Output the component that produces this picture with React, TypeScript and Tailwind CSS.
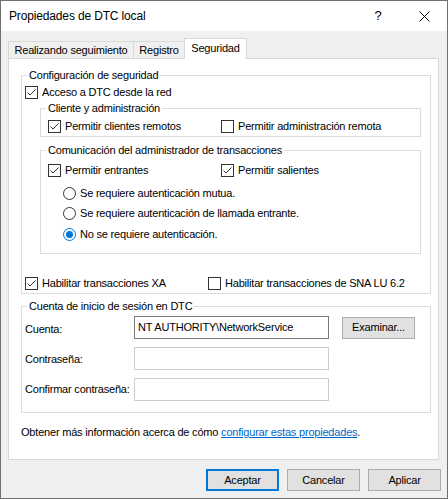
import React from "react";

const font = "font-['Liberation_Sans',Arial,sans-serif] text-[11px] tracking-[-0.2px] text-black";

const CheckBox: React.FC<{ checked?: boolean }> = ({ checked }) => (
  <svg width="13" height="13" viewBox="0 0 13 13" className="shrink-0">
    <rect x="0.5" y="0.5" width="12" height="12" fill="#fff" stroke="#333" />
    {checked && <path d="M2.5 6.5 L5 9 L10.5 3.5" fill="none" stroke="#333" strokeWidth="1" />}
  </svg>
);

const Radio: React.FC<{ checked?: boolean }> = ({ checked }) => (
  <svg width="13" height="13" viewBox="0 0 13 13" className="shrink-0">
    <circle cx="6.5" cy="6.5" r="6" fill="#fff" stroke={checked ? "#0078d7" : "#333"} />
    {checked && <circle cx="6.5" cy="6.5" r="3.5" fill="#0078d7" />}
  </svg>
);

const Check: React.FC<{ label: string; checked?: boolean; className?: string }> = ({ label, checked, className }) => (
  <div className={`flex h-[16px] items-center gap-[4px] ${className ?? ""}`}>
    <CheckBox checked={checked} />
    <span className="whitespace-nowrap leading-[15px]">{label}</span>
  </div>
);

const RadioRow: React.FC<{ label: string; checked?: boolean; className?: string }> = ({ label, checked, className }) => (
  <div className={`flex h-[16px] items-center gap-[4px] ${className ?? ""}`}>
    <Radio checked={checked} />
    <span className="whitespace-nowrap leading-[15px]">{label}</span>
  </div>
);

// group box: label pulled up over the top border
const GroupLabel: React.FC<{ text: string; className?: string }> = ({ text, className }) => (
  <div className={`-mt-[8px] h-[15px] w-fit bg-white px-[2px] leading-[15px] whitespace-nowrap ${className ?? ""}`}>
    {text}
  </div>
);

const Button: React.FC<{ label: string; primary?: boolean }> = ({ label, primary }) => (
  <div
    className={`flex h-[22px] w-[73px] items-center justify-center bg-[#e1e1e1] ${
      primary ? "border-2 border-[#0078d7]" : "border border-[#adadad]"
    }`}
  >
    {label}
  </div>
);

export default function App() {
  return (
    <div className={`flex h-[499px] w-[448px] flex-col border border-[#707070] bg-[#f0f0f0] ${font}`}>
      {/* title bar */}
      <div className="flex h-[30px] shrink-0 items-center bg-white">
        <div className="flex-1 pl-[8px] text-[12px] tracking-[-0.15px]">Propiedades de DTC local</div>
        <div className="flex h-[30px] w-[46px] items-center justify-center text-[13px]">?</div>
        <div className="flex h-[30px] w-[46px] items-center justify-center">
          <svg width="11" height="11" viewBox="0 0 11 11">
            <path d="M0.5 0.5 L10.5 10.5 M10.5 0.5 L0.5 10.5" stroke="#000" strokeWidth="1" />
          </svg>
        </div>
      </div>

      {/* tabs */}
      <div className="ml-[7px] mt-[7px] flex h-[20px] shrink-0 items-end">
        <div className="flex h-[17px] w-[126px] items-center justify-center border-x border-t border-[#d9d9d9] pt-[1px]">
          Realizando seguimiento
        </div>
        <div className="flex h-[17px] w-[50px] items-center justify-center border-t border-[#d9d9d9] pt-[1px]">
          Registro
        </div>
        <div className="relative z-10 -mb-[1px] flex h-[21px] w-[63px] items-center justify-center border-x border-t border-[#d9d9d9] bg-white pb-[2px]">
          Seguridad
        </div>
      </div>

      {/* panel */}
      <div className="ml-[7px] flex h-[402px] w-[431px] shrink-0 flex-col border border-[#d9d9d9] bg-white">
        {/* Configuración de seguridad */}
        <div className="ml-[12px] mt-[16px] w-[410px] border border-[#dcdcdc] pb-[2px] pl-[3px]">
          <GroupLabel text="Configuración de seguridad" className="ml-[2px]" />
          <Check label="Acceso a DTC desde la red" checked className="mt-[1px]" />

          <div className="ml-[15px] mt-[8px] w-[381px] border border-[#dcdcdc] pb-[2px] pl-[7px]">
            <GroupLabel text="Cliente y administración" className="-ml-[2px]" />
            <div className="mt-[2px] flex">
              <Check label="Permitir clientes remotos" checked className="w-[173px]" />
              <Check label="Permitir administración remota" />
            </div>
          </div>

          <div className="ml-[15px] mt-[13px] w-[381px] border border-[#dcdcdc] pb-[11px] pl-[7px]">
            <GroupLabel text="Comunicación del administrador de transacciones" className="-ml-[2px]" />
            <div className="mt-[4px] flex">
              <Check label="Permitir entrantes" checked className="w-[173px]" />
              <Check label="Permitir salientes" checked />
            </div>
            <div className="pl-[15px]">
              <RadioRow label="Se requiere autenticación mutua." className="mt-[7px]" />
              <RadioRow label="Se requiere autenticación de llamada entrante." className="mt-[4px]" />
              <RadioRow label="No se requiere autenticación." checked className="mt-[5px]" />
            </div>
          </div>

          <div className="mt-[21px] flex">
            <Check label="Habilitar transacciones XA" checked className="w-[183px]" />
            <Check label="Habilitar transacciones de SNA LU 6.2" />
          </div>
        </div>

        {/* Cuenta de inicio de sesión */}
        <div className="ml-[12px] mt-[12px] w-[410px] border border-[#dcdcdc] pb-[11px] pl-[3px]">
          <GroupLabel text="Cuenta de inicio de sesión en DTC" className="ml-[2px]" />
          <div className="mt-[2px] flex items-center">
            <span className="w-[109px] pt-[3px]">Cuenta:</span>
            <div className="flex h-[23px] w-[195px] items-center border border-[#7a7a7a] pl-[3px]">
              NT AUTHORITY\NetworkService
            </div>
            <div className="ml-[13px]">
              <Button label="Examinar..." />
            </div>
          </div>
          <div className="mt-[8px] flex items-center">
            <span className="w-[109px] pt-[1px]">Contraseña:</span>
            <div className="h-[23px] w-[195px] border border-[#cccccc]" />
          </div>
          <div className="mt-[8px] flex items-center">
            <span className="w-[109px]">Confirmar contraseña:</span>
            <div className="h-[23px] w-[195px] border border-[#cccccc]" />
          </div>
        </div>

        <div className="ml-[12px] mt-[12px] leading-[15px]">
          Obtener más información acerca de cómo{" "}
          <span className="text-[#0066cc] underline">configurar estas propiedades</span>.
        </div>
      </div>

      {/* buttons */}
      <div className="mt-[9px] flex justify-end gap-[8px] pr-[6px]">
        <Button label="Aceptar" primary />
        <Button label="Cancelar" />
        <Button label="Aplicar" />
      </div>
    </div>
  );
}
